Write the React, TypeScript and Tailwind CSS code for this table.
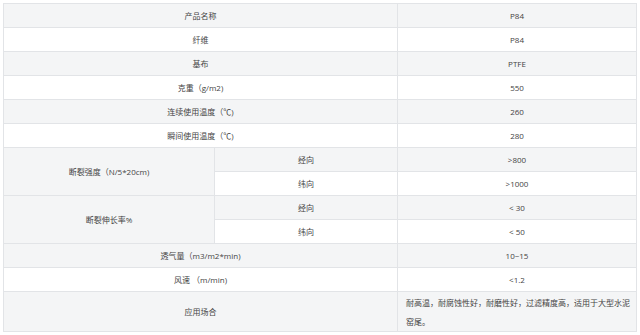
import React from "react";

type Row = { kind: "full"; label: string; value: string } | { kind: "split"; label: string; subs: [string, string][] };

const rows: Row[] = [
  { kind: "full", label: "产品名称", value: "P84" },
  { kind: "full", label: "纤维", value: "P84" },
  { kind: "full", label: "基布", value: "PTFE" },
  { kind: "full", label: "克重（g/m2)", value: "550" },
  { kind: "full", label: "连续使用温度（℃)", value: "260" },
  { kind: "full", label: "瞬间使用温度（℃)", value: "280" },
  { kind: "split", label: "断裂强度（N/5*20cm)", subs: [["经向", ">800"], ["纬向", ">1000"]] },
  { kind: "split", label: "断裂伸长率%", subs: [["经向", "< 30"], ["纬向", "< 50"]] },
  { kind: "full", label: "透气量（m3/m2*min)", value: "10~15" },
  { kind: "full", label: "风速 （m/min)", value: "<1.2" },
];

export default function App() {
  const cell = "border border-[#e2e4e7] text-center align-middle p-0 h-[24px]";
  let idx = 0;
  const trs: React.ReactNode[] = [];
  rows.forEach((r, i) => {
    if (r.kind === "full") {
      const bg = idx % 2 === 0 ? "bg-[#f4f5f6]" : "bg-white";
      idx++;
      trs.push(
        <tr key={i} className={bg}>
          <td colSpan={2} className={cell}>{r.label}</td>
          <td className={cell}>{r.value}</td>
        </tr>
      );
    } else {
      r.subs.forEach((s, j) => {
        const bg = idx % 2 === 0 ? "bg-[#f4f5f6]" : "bg-white";
        idx++;
        trs.push(
          <tr key={i + "-" + j} className={bg}>
            {j === 0 && (
              <td rowSpan={2} className={cell + " bg-[#f4f5f6]"}>{r.label}</td>
            )}
            <td className={cell}>{s[0]}</td>
            <td className={cell}>{s[1]}</td>
          </tr>
        );
      });
    }
  });
  const bg = idx % 2 === 0 ? "bg-[#f4f5f6]" : "bg-white";
  trs.push(
    <tr key="last" className={bg}>
      <td colSpan={2} className={cell}>应用场合</td>
      <td className="border border-[#e2e4e7] text-left align-middle pl-[8px] pr-[4px] py-0 h-[40px] leading-[19px]">
        耐高温，耐腐蚀性好，耐磨性好，过滤精度高，适用于大型水泥窑尾。
      </td>
    </tr>
  );
  return (
    <div
      className="w-[640px] h-[335px] bg-white pt-[3px] pl-[3px] text-[8px] text-[#444]"
      style={{ fontFamily: '"Open Sans", "Noto Sans CJK SC", sans-serif' }}
    >
      <table className="border-collapse table-fixed w-[633px]">
        <colgroup>
          <col className="w-[211px]" />
          <col className="w-[183px]" />
          <col className="w-[239px]" />
        </colgroup>
        <tbody>{trs}</tbody>
      </table>
    </div>
  );
}
